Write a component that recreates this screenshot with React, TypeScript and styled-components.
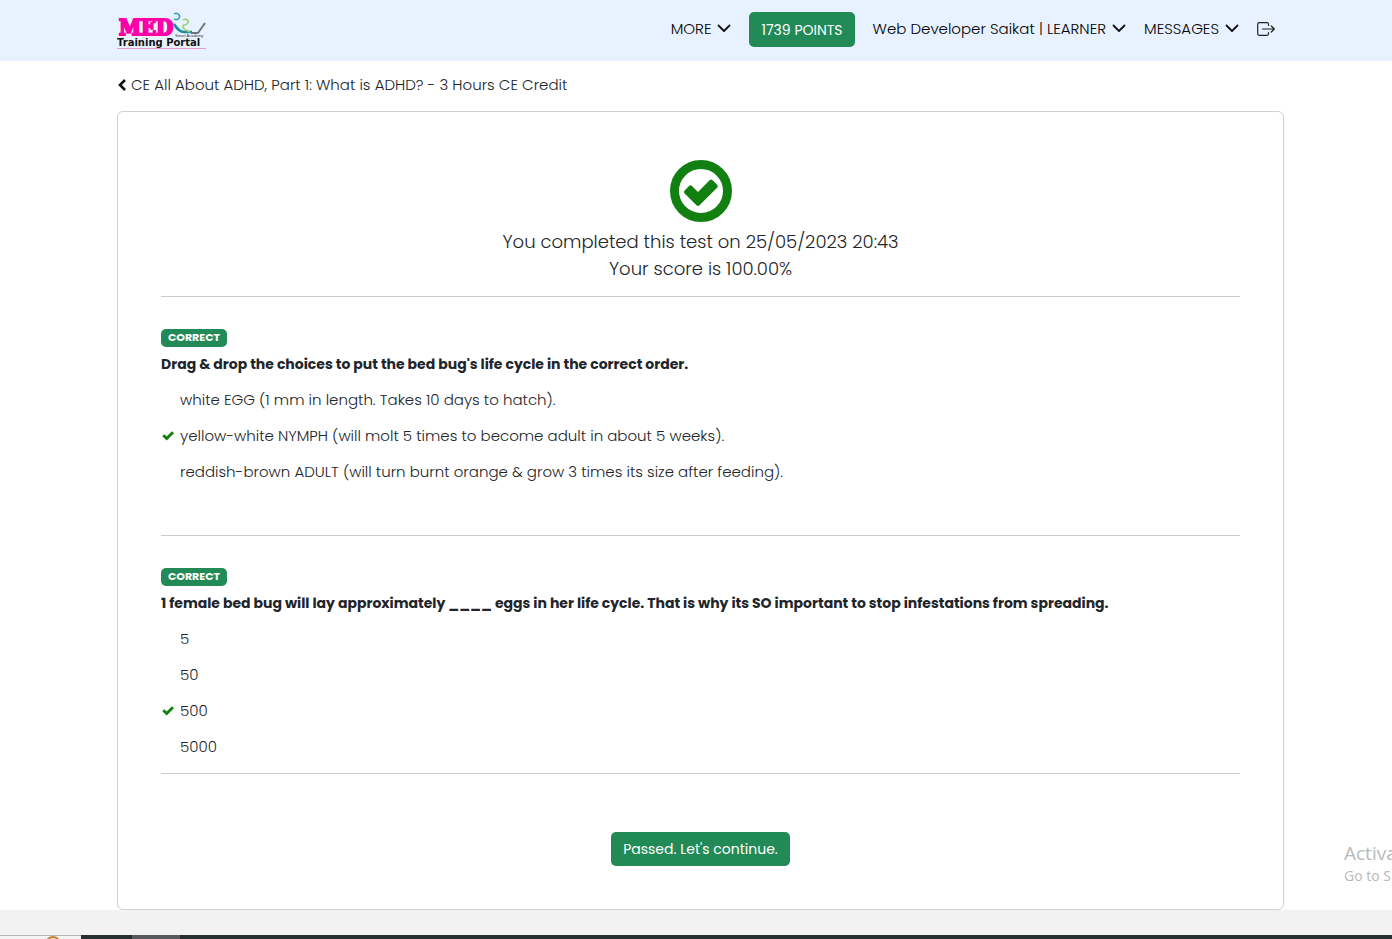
import React from "react";
import styled, { createGlobalStyle } from "styled-components";

const GlobalStyle = createGlobalStyle`
  *, *::before, *::after { box-sizing: border-box; }
  body {
    margin: 0;
    background: #fff;
    color: #212529;
    font-family: Poppins, Inter, "Open Sans", sans-serif;
    font-size: 15px;
    font-weight: 300;
    line-height: 22px;
  }
`;

const Page = styled.div`
  display: flex;
  flex-direction: column;
  min-height: 100vh;
  overflow-x: hidden;
`;

const Header = styled.header`
  display: flex;
  align-items: flex-start;
  justify-content: space-between;
  min-height: 61px;
  padding: 0 117px;
  background: #e7f1ff;
`;

const LogoLink = styled.a`
  display: block;
  height: 38px;
  margin-top: 12px;
`;

const Nav = styled.nav`
  display: flex;
  align-items: center;
  gap: 18px;
  height: 59px;
`;

const NavButton = styled.button`
  display: flex;
  align-items: center;
  gap: 6px;
  padding: 0 0 2px;
  border: 0;
  background: none;
  color: #000;
  font: inherit;
  white-space: nowrap;
  cursor: pointer;
`;

const SolidButton = styled.button<{ $height: number }>`
  height: ${(p) => p.$height}px;
  padding: 0 12px;
  border: 0;
  border-radius: 5px;
  background: #218a56;
  color: #fff;
  font: inherit;
  font-size: 14px;
  font-weight: 400;
  white-space: nowrap;
  cursor: pointer;
`;

const Main = styled.main`
  flex: 1;
  padding: 13px 108px 0 117px;
`;

const BackLink = styled.a`
  display: flex;
  align-items: center;
  gap: 4px;
  margin-bottom: 15px;
  color: #212529;
  text-decoration: none;
`;

const Card = styled.section`
  display: flex;
  flex-direction: column;
  padding: 48px 43px 43px;
  border: 1px solid #ced0d2;
  border-radius: 6px;
`;

const Result = styled.div`
  display: flex;
  flex-direction: column;
  align-items: center;
  padding-bottom: 14px;
  font-size: 18px;
  line-height: 27px;
  text-align: center;

  svg { margin-bottom: 6px; }
  p { margin: 0; }
`;

const Question = styled.article<{ $bottom: number }>`
  padding: 32px 0 ${(p) => p.$bottom}px;
  border-top: 1px solid #c9cbcc;
`;

const Badge = styled.span`
  display: block;
  width: 66px;
  height: 18px;
  border-radius: 5px;
  background: #218a56;
  color: #fff;
  font-size: 11px;
  font-weight: 700;
  line-height: 16px;
  text-align: center;
`;

const Prompt = styled.h2`
  margin: 6px 0 14px;
  font-size: 14px;
  font-weight: 700;
  line-height: 22px;
`;

const Options = styled.ul`
  display: flex;
  flex-direction: column;
  gap: 14px;
  margin: 0;
  padding: 0;
  list-style: none;
`;

const Option = styled.li`
  display: grid;
  grid-template-columns: 14px 1fr;
  column-gap: 5px;
  align-items: center;
`;

const Actions = styled.div`
  display: flex;
  justify-content: center;
  padding-top: 58px;
  border-top: 1px solid #c9cbcc;
`;

const Footer = styled.footer`
  height: 25px;
  background: #f2f2f2;
`;

const Taskbar = styled.div`
  display: flex;
  height: 4px;
  background: #25302f;
`;

const TaskbarStart = styled.div`
  display: flex;
  justify-content: center;
  width: 81px;
  padding-left: 24px;
  border-top: 1px solid #b5b5b5;
  background: #f3f3f3;
`;

const TaskbarItem = styled.div`
  width: 48px;
  margin-left: 51px;
  background: #58595b;
`;

const Watermark = styled.aside`
  position: absolute;
  top: 841px;
  left: calc(100% - 48px);
  width: 48px;
  overflow: hidden;
  color: #b9b9b9;
  font-family: "Open Sans", "Noto Sans", sans-serif;
  font-size: 14px;
  font-weight: 400;
  line-height: 20px;
  white-space: nowrap;
  pointer-events: none;

  strong {
    display: block;
    font-size: 19px;
    font-weight: 400;
    line-height: 25px;
  }
`;

const Chevron = () => (
  <svg width="14" height="9" viewBox="0 0 14 9" aria-hidden="true">
    <path d="M1.500 1.500 7 7l5.500-5.500" fill="none" stroke="#111" strokeWidth="1.800" strokeLinecap="round" strokeLinejoin="round" />
  </svg>
);

const SmallCheck = () => (
  <svg width="14" height="11" viewBox="0 0 14 11" aria-label="Your answer">
    <path d="M2.300 5.200 5.700 8.500 12 2.200" fill="none" stroke="#118011" strokeWidth="2.900" />
  </svg>
);

const Logo = () => (
  <svg width="90" height="38" viewBox="0 0 90 38" role="img" aria-label="MED Training Portal">
    <text x="2" y="23" fill="#ff00a8" stroke="#ff00a8" strokeWidth="2" fontFamily="'DejaVu Serif Condensed', 'DejaVu Serif', serif" fontWeight="700" fontSize="22">MED</text>
    <path d="M57 2c3-2 7 1 5 4-1 2-3 2-5 1" fill="none" stroke="#3f9fc0" strokeWidth="1.600" />
    <path d="M57 12c3 5 6 8 10 8h8" fill="none" stroke="#1b8da0" strokeWidth="2.600" />
    <path d="M66 8c4-2 7 1 4 4-2 2-5 0-4 3s4 4 7 5" fill="none" stroke="#9bcf6b" strokeWidth="1.500" />
    <path d="M74 21h7l7-10" fill="none" stroke="#667780" strokeWidth="2" strokeLinejoin="round" />
    <text x="58" y="25" fill="#334" fontFamily="'Liberation Sans', sans-serif" fontSize="4">Smart Academy</text>
    <text x="0" y="34" fill="#111" fontFamily="'DejaVu Sans', sans-serif" fontWeight="700" fontSize="10">Training Portal</text>
    <path d="M0 36.500h89" stroke="#e79acb" strokeWidth="1" />
  </svg>
);

const questions = [
  {
    prompt: "Drag & drop the choices to put the bed bug's life cycle in the correct order.",
    options: [
      "white EGG (1 mm in length. Takes 10 days to hatch).",
      "yellow-white NYMPH (will molt 5 times to become adult in about 5 weeks).",
      "reddish-brown ADULT (will turn burnt orange & grow 3 times its size after feeding).",
    ],
    checked: 1,
    bottom: 52,
  },
  {
    prompt: "1 female bed bug will lay approximately ____ eggs in her life cycle. That is why its SO important to stop infestations from spreading.",
    options: ["5", "50", "500", "5000"],
    checked: 2,
    bottom: 15,
  },
];

export default function App() {
  return (
    <Page>
      <GlobalStyle />
      <Header>
        <LogoLink href="#home"><Logo /></LogoLink>
        <Nav>
          <NavButton>MORE <Chevron /></NavButton>
          <SolidButton $height={35}>1739 POINTS</SolidButton>
          <NavButton>Web Developer Saikat | LEARNER <Chevron /></NavButton>
          <NavButton>MESSAGES <Chevron /></NavButton>
          <NavButton aria-label="Log out">
            <svg width="18" height="14" viewBox="0 0 18 14" fill="none" stroke="#222" strokeWidth="1.200" strokeLinecap="round" strokeLinejoin="round">
              <path d="M11.500 3.500V2.200Q11.500.7 10 .7H2.200Q.7.7.7 2.200v9.600q0 1.500 1.500 1.500H10q1.500 0 1.500-1.500v-1.300M5.500 7h11.800M14.300 4l3 3-3 3" />
            </svg>
          </NavButton>
        </Nav>
      </Header>
      <Main>
        <BackLink href="#course">
          <svg width="10" height="14" viewBox="0 0 10 14" aria-hidden="true">
            <path d="M8 2 3 7l5 5" fill="none" stroke="#111" strokeWidth="2.600" />
          </svg>
          CE All About ADHD, Part 1: What is ADHD? - 3 Hours CE Credit
        </BackLink>
        <Card>
          <Result>
            <svg width="62" height="62" viewBox="0 0 62 62" aria-hidden="true">
              <circle cx="31" cy="31" r="26.500" fill="none" stroke="#118011" strokeWidth="9" />
              <path d="M14.600 30.500 19 26q1.500-1.500 3 0l6 6L39.600 20.300q1.500-1.500 3 0l4.500 4.500q1.500 1.500 0 3L29.500 45.200q-1.500 1.500-3 0L14.600 33.500q-1.500-1.500 0-3Z" fill="#118011" />
            </svg>
            <p>You completed this test on 25/05/2023 20:43</p>
            <p>Your score is 100.00%</p>
          </Result>
          {questions.map((q) => (
            <Question key={q.prompt} $bottom={q.bottom}>
              <Badge>CORRECT</Badge>
              <Prompt>{q.prompt}</Prompt>
              <Options>
                {q.options.map((text, i) => (
                  <Option key={text}>
                    <span>{i === q.checked && <SmallCheck />}</span>
                    {text}
                  </Option>
                ))}
              </Options>
            </Question>
          ))}
          <Actions>
            <SolidButton $height={34}>Passed. Let's continue.</SolidButton>
          </Actions>
        </Card>
      </Main>
      <Footer />
      <Taskbar>
        <TaskbarStart>
          <svg width="14" height="3" viewBox="0 0 14 3" aria-hidden="true">
            <path d="M1 4q6-6 12 0" fill="none" stroke="#c47a1e" strokeWidth="2" />
          </svg>
        </TaskbarStart>
        <TaskbarItem />
      </Taskbar>
      <Watermark>
        <strong>Activa</strong>
        Go to S
      </Watermark>
    </Page>
  );
}
